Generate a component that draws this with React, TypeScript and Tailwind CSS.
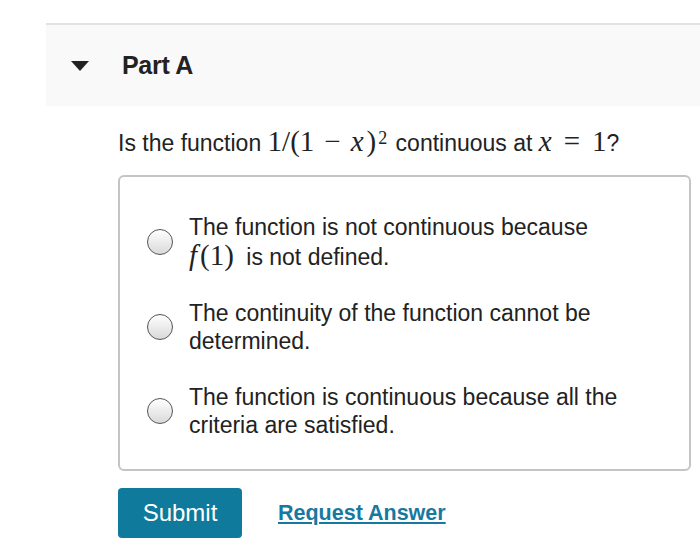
import React from "react";

const sans = { fontFamily: '"Liberation Sans", Arial, sans-serif' };
const serif = "font-['Liberation_Serif','Times_New_Roman',serif]";

function Radio() {
  return (
    <span className="block w-[26px] h-[26px] flex-shrink-0 rounded-full border-[1.5px] border-[#555] bg-gradient-to-b from-white to-[#d9d9d9]" />
  );
}

function Option({ children }: { children: React.ReactNode }) {
  return (
    <label className="flex items-center gap-4">
      <Radio />
      <span className="text-[23px] leading-[28px] text-[#222]">{children}</span>
    </label>
  );
}

export default function App() {
  return (
    <div className="min-h-[557px] bg-white pt-[23px] pl-[46px]" style={sans}>
      {/* Part header */}
      <div className="h-[83px] border-t-2 border-[#e2e2e2] bg-[#f9f9f9] flex items-center">
        <svg width="18" height="11" viewBox="0 0 18 11" className="ml-[25px] mt-[2px]">
          <polygon points="0,0 18,0 9,10" fill="#222" />
        </svg>
        <span className="ml-[33px] text-[25px] font-bold text-[#222] tracking-[-0.3px]">Part A</span>
      </div>

      <div className="pl-[72px]">
        <p className="mt-[21px] text-[23px] leading-[28px] text-[#222]">
          Is the function{" "}
          <span className={`${serif} text-[29px] leading-[28px]`}>
            1/(1<span className="mx-[10px]">−</span><i className="mr-[3px]">x</i>)<sup className="text-[18px] relative -top-[7px] ml-[2px]">2</sup>
          </span>{" "}
          <span className="ml-[2px]">continuous at</span>{" "}
          <span className={`${serif} text-[29px] leading-[28px]`}>
            <i>x</i><span className="mx-[12px]">=</span>1
          </span>
          ?
        </p>

        <div className="mt-[18px] w-[573px] border-2 border-[#c4c4c4] rounded-md pl-[27px] pt-[36px] pb-[30px] flex flex-col gap-[28px]">
          <Option>
            The function is not continuous because
            <br />
            <span className={`${serif} text-[29px] leading-[28px] mr-[6px]`}>
              <i className="mr-[3px]">f</i>(1)
            </span>{" "}
            is not defined.
          </Option>
          <Option>
            The continuity of the function cannot be
            <br />
            determined.
          </Option>
          <Option>
            The function is continuous because all the
            <br />
            criteria are satisfied.
          </Option>
        </div>

        <div className="mt-[17px] flex items-center gap-[36px]">
          <button className="w-[124px] h-[50px] rounded bg-[#0f7a9b] text-white text-[24px]">
            Submit
          </button>
          <a href="#" className="text-[21.5px] font-bold text-[#1879a0] underline underline-offset-2">
            Request Answer
          </a>
        </div>
      </div>
    </div>
  );
}
